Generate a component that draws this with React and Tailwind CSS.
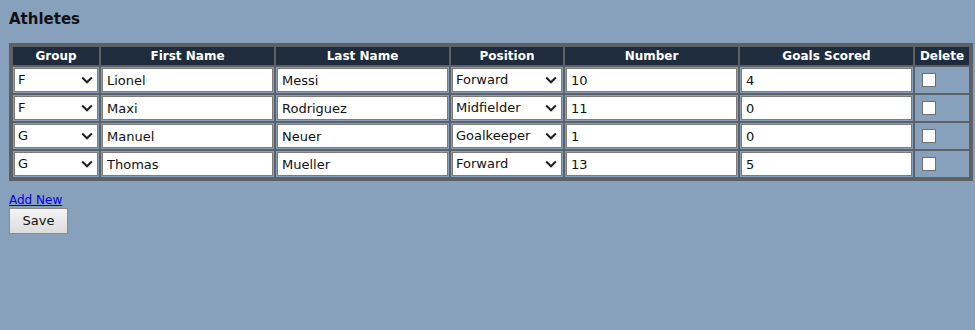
import React, { useState } from "react";

const groups = ["F", "G", "D", "M"];
const positions = ["Forward", "Midfielder", "Goalkeeper", "Defender"];

const initialAthletes = [
  { group: "F", first: "Lionel", last: "Messi", position: "Forward", number: "10", goals: "4" },
  { group: "F", first: "Maxi", last: "Rodriguez", position: "Midfielder", number: "11", goals: "0" },
  { group: "G", first: "Manuel", last: "Neuer", position: "Goalkeeper", number: "1", goals: "0" },
  { group: "G", first: "Thomas", last: "Mueller", position: "Forward", number: "13", goals: "5" },
];

const Chevron = () => (
  <svg
    className="pointer-events-none absolute right-[5px] top-1/2 -translate-y-1/2"
    width="12"
    height="8"
    viewBox="0 0 12 8"
  >
    <path d="M1.2 1.5 L6 6.3 L10.8 1.5" fill="none" stroke="#222" strokeWidth="2" />
  </svg>
);

const Select = ({ value, options, onChange }) => (
  <div className="relative">
    <select
      value={value}
      onChange={onChange}
      className="block h-[24px] w-full appearance-none border border-[#7b7b7b] bg-white pl-[3px] pr-[16px] text-[13px] text-[#111] outline-none"
    >
      {options.map((o) => (
        <option key={o} value={o}>
          {o}
        </option>
      ))}
    </select>
    <Chevron />
  </div>
);

const TextInput = ({ value, onChange }) => (
  <input
    type="text"
    value={value}
    onChange={onChange}
    className="block h-[24px] w-full border border-[#7b7b7b] bg-white px-[4px] text-[13px] text-[#111] outline-none"
  />
);

export default function App() {
  const [athletes, setAthletes] = useState(initialAthletes);

  const update = (i, key) => (e) => {
    const next = athletes.slice();
    next[i] = { ...next[i], [key]: e.target.value };
    setAthletes(next);
  };

  const th = "h-[18px] bg-[#1f2c3e] p-0 text-center text-[12px] font-bold leading-[18px] text-white";
  const td = "bg-[#87a0bc] p-[1px]";

  return (
    <div
      className="min-h-[330px] w-full bg-[#87a0bc] pl-[9px] pr-[2px] pt-[9px]"
      style={{ fontFamily: "'DejaVu Sans', Verdana, sans-serif" }}
    >
      <h1 className="mb-[14px] text-[15px] font-bold leading-[20px] text-[#111]">Athletes</h1>

      <table className="w-[964px] table-fixed border-separate border-spacing-[2px] border-2 border-[#5d6166] bg-[#5d6166]">
        <thead>
          <tr>
            <th className={`${th} w-[86px]`}>Group</th>
            <th className={`${th} w-[173px]`}>First Name</th>
            <th className={`${th} w-[173px]`}>Last Name</th>
            <th className={`${th} w-[112px]`}>Position</th>
            <th className={`${th} w-[173px]`}>Number</th>
            <th className={`${th} w-[173px]`}>Goals Scored</th>
            <th className={`${th} w-[54px]`}>Delete</th>
          </tr>
        </thead>
        <tbody>
          {athletes.map((a, i) => (
            <tr key={i}>
              <td className={td}>
                <Select value={a.group} options={groups} onChange={update(i, "group")} />
              </td>
              <td className={td}>
                <TextInput value={a.first} onChange={update(i, "first")} />
              </td>
              <td className={td}>
                <TextInput value={a.last} onChange={update(i, "last")} />
              </td>
              <td className={td}>
                <Select value={a.position} options={positions} onChange={update(i, "position")} />
              </td>
              <td className={td}>
                <TextInput value={a.number} onChange={update(i, "number")} />
              </td>
              <td className={td}>
                <TextInput value={a.goals} onChange={update(i, "goals")} />
              </td>
              <td className={`${td} align-top`}>
                <div className="flex h-[24px] items-center pl-[6px]">
                  <input
                    type="checkbox"
                    className="h-[14px] w-[14px] appearance-none border border-[#6f6f6f] bg-white checked:bg-[#2563eb]"
                  />
                </div>
              </td>
            </tr>
          ))}
        </tbody>
      </table>

      <div className="mt-[12px] flex flex-col items-start">
        <a href="#" className="text-[12px] leading-[14px] text-[#0000ee] underline">
          Add New
        </a>
        <button className="mt-[1px] h-[26px] w-[59px] border border-[#8a8a8a] bg-gradient-to-b from-[#f4f4f4] to-[#dcdcdc] text-[13px] text-[#111]">
          Save
        </button>
      </div>
    </div>
  );
}
